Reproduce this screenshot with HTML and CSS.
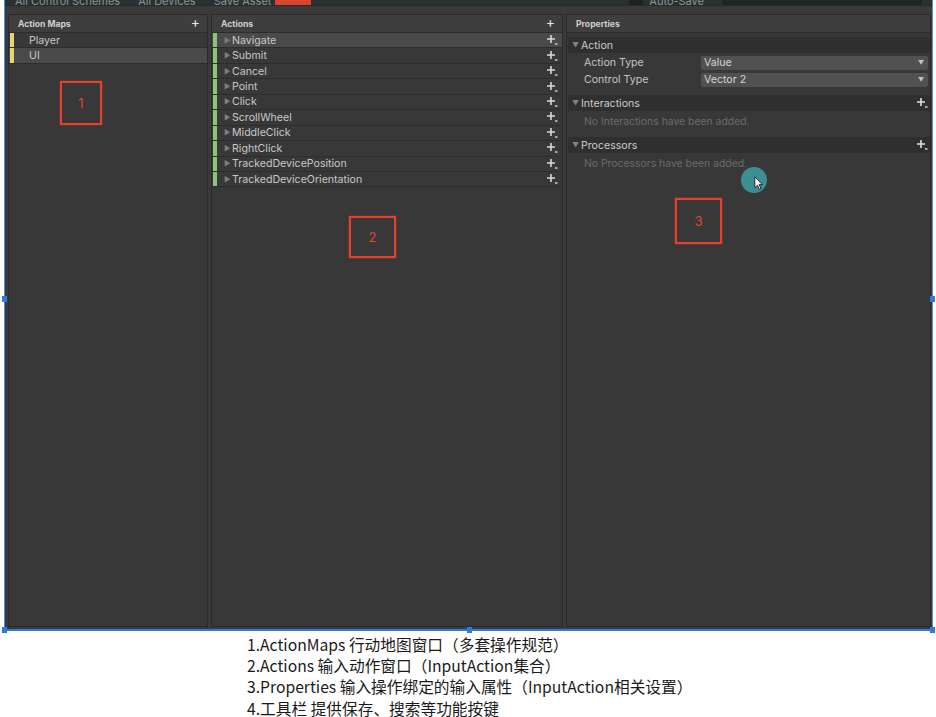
FILE: index.html
```html
<!DOCTYPE html>
<html>
<head>
<meta charset="utf-8">
<link rel="stylesheet" href="styles.css">
</head>
<body>
<div class="editor">
  <div class="toolbar">
    <span class="tb-item">All Control Schemes</span>
    <span class="tb-item">All Devices</span>
    <span class="tb-item">Save Asset <span class="tb-red"></span></span>
    <span class="tb-spacer"></span>
    <span class="tb-toggle"></span><span class="tb-item">Auto-Save</span>
    <span class="tb-search"></span>
  </div>
  <div class="panes">
    <section class="pane pane-maps">
      <div class="pane-head"><span>Action Maps</span><span class="plus">+</span></div>
      <div class="row map"><span class="bar yellow"></span><span class="label">Player</span></div>
      <div class="row map selected"><span class="bar yellow"></span><span class="label">UI</span></div>
      <div class="note-wrap note-1"><div class="note">1</div></div>
    </section>
    <section class="pane pane-actions">
      <div class="pane-head"><span>Actions</span><span class="plus">+</span></div>
      <div class="row act hover"><span class="bar green"></span><span class="tri">&#9654;</span><span class="label">Navigate</span><svg class="pd" viewBox="0 0 12 12"><path d="M5 1v8M1 5h8" stroke="#d8d8d8" stroke-width="1.6"/><path d="M9 10h2.5" stroke="#d8d8d8" stroke-width="1.4"/></svg></div>
      <div class="row act"><span class="bar green"></span><span class="tri">&#9654;</span><span class="label">Submit</span><svg class="pd" viewBox="0 0 12 12"><path d="M5 1v8M1 5h8" stroke="#d8d8d8" stroke-width="1.6"/><path d="M9 10h2.5" stroke="#d8d8d8" stroke-width="1.4"/></svg></div>
      <div class="row act"><span class="bar green"></span><span class="tri">&#9654;</span><span class="label">Cancel</span><svg class="pd" viewBox="0 0 12 12"><path d="M5 1v8M1 5h8" stroke="#d8d8d8" stroke-width="1.6"/><path d="M9 10h2.5" stroke="#d8d8d8" stroke-width="1.4"/></svg></div>
      <div class="row act"><span class="bar green"></span><span class="tri">&#9654;</span><span class="label">Point</span><svg class="pd" viewBox="0 0 12 12"><path d="M5 1v8M1 5h8" stroke="#d8d8d8" stroke-width="1.6"/><path d="M9 10h2.5" stroke="#d8d8d8" stroke-width="1.4"/></svg></div>
      <div class="row act"><span class="bar green"></span><span class="tri">&#9654;</span><span class="label">Click</span><svg class="pd" viewBox="0 0 12 12"><path d="M5 1v8M1 5h8" stroke="#d8d8d8" stroke-width="1.6"/><path d="M9 10h2.5" stroke="#d8d8d8" stroke-width="1.4"/></svg></div>
      <div class="row act"><span class="bar green"></span><span class="tri">&#9654;</span><span class="label">ScrollWheel</span><svg class="pd" viewBox="0 0 12 12"><path d="M5 1v8M1 5h8" stroke="#d8d8d8" stroke-width="1.6"/><path d="M9 10h2.5" stroke="#d8d8d8" stroke-width="1.4"/></svg></div>
      <div class="row act"><span class="bar green"></span><span class="tri">&#9654;</span><span class="label">MiddleClick</span><svg class="pd" viewBox="0 0 12 12"><path d="M5 1v8M1 5h8" stroke="#d8d8d8" stroke-width="1.6"/><path d="M9 10h2.5" stroke="#d8d8d8" stroke-width="1.4"/></svg></div>
      <div class="row act"><span class="bar green"></span><span class="tri">&#9654;</span><span class="label">RightClick</span><svg class="pd" viewBox="0 0 12 12"><path d="M5 1v8M1 5h8" stroke="#d8d8d8" stroke-width="1.6"/><path d="M9 10h2.5" stroke="#d8d8d8" stroke-width="1.4"/></svg></div>
      <div class="row act"><span class="bar green"></span><span class="tri">&#9654;</span><span class="label">TrackedDevicePosition</span><svg class="pd" viewBox="0 0 12 12"><path d="M5 1v8M1 5h8" stroke="#d8d8d8" stroke-width="1.6"/><path d="M9 10h2.5" stroke="#d8d8d8" stroke-width="1.4"/></svg></div>
      <div class="row act"><span class="bar green"></span><span class="tri">&#9654;</span><span class="label">TrackedDeviceOrientation</span><svg class="pd" viewBox="0 0 12 12"><path d="M5 1v8M1 5h8" stroke="#d8d8d8" stroke-width="1.6"/><path d="M9 10h2.5" stroke="#d8d8d8" stroke-width="1.4"/></svg></div>
      <div class="note-wrap note-2"><div class="note">2</div></div>
    </section>
    <section class="pane pane-props">
      <div class="pane-head"><span>Properties</span></div>
      <div class="fold"><span class="dtri">&#9660;</span><span>Action</span></div>
      <div class="field"><span class="flabel">Action Type</span><div class="dropdown"><span>Value</span><span class="dd-arrow">&#9660;</span></div></div>
      <div class="field"><span class="flabel">Control Type</span><div class="dropdown"><span>Vector 2</span><span class="dd-arrow">&#9660;</span></div></div>
      <div class="fold fold-gap"><span class="dtri">&#9660;</span><span class="grow">Interactions</span><svg class="pd" viewBox="0 0 12 12"><path d="M5 1v8M1 5h8" stroke="#e0e0e0" stroke-width="1.6"/><path d="M9 10h2.5" stroke="#e0e0e0" stroke-width="1.4"/></svg></div>
      <div class="empty">No Interactions have been added.</div>
      <div class="fold fold-gap2"><span class="dtri">&#9660;</span><span class="grow">Processors</span><svg class="pd" viewBox="0 0 12 12"><path d="M5 1v8M1 5h8" stroke="#e0e0e0" stroke-width="1.6"/><path d="M9 10h2.5" stroke="#e0e0e0" stroke-width="1.4"/></svg></div>
      <div class="empty">No Processors have been added.</div>
      <div class="note-wrap note-3"><div class="note">3</div></div>
      <div class="cursor-dot"></div>
      <svg class="cursor" viewBox="0 0 12 18"><path d="M1 1v13l3.2-3 2.2 5 2-.9-2.2-4.8H10z" fill="#fff" stroke="#111" stroke-width="1"/></svg>
    </section>
  </div>
  <span class="handle h-ml"></span>
  <span class="handle h-mr"></span>
  <span class="handle h-bl"></span>
  <span class="handle h-bm"></span>
  <span class="handle h-br"></span>
</div>
<div class="caption">
  <p>1.ActionMaps 行动地图窗口（多套操作规范）</p>
  <p>2.Actions 输入动作窗口（InputAction集合）</p>
  <p>3.Properties 输入操作绑定的输入属性（InputAction相关设置）</p>
  <p>4.工具栏 提供保存、搜索等功能按键</p>
</div>
</body>
</html>
```

FILE: styles.css
```css
* { box-sizing: border-box; }
html, body { margin: 0; padding: 0; background: #ffffff; }
body { width: 936px; height: 717px; overflow: hidden; font-family: Inter, "Noto Sans", sans-serif; }

.editor {
  position: relative;
  margin-left: 4px;
  width: 929px;
  height: 631px;
  background: #333333;
  border-left: 1px solid #4f8fd8;
  border-right: 1px solid #4f8fd8;
  border-bottom: 2px solid #2f7ae0;
  display: flex;
  flex-direction: column;
}

.toolbar {
  height: 6px;
  overflow: hidden;
  background: #2b3133;
  display: flex;
  align-items: flex-end;
  gap: 18px;
  padding-left: 10px;
  color: #8d9395;
  font-size: 11px;
  line-height: 7px;
  border-bottom: 1px solid #262a2b;
}
.tb-item { white-space: nowrap; height: 6px; display: flex; align-items: flex-end; }
.tb-red { display: inline-block; width: 36px; height: 6px; background: #d9442f; margin-left: 4px; }
.tb-spacer { flex: 1; }
.tb-toggle { display: inline-block; width: 14px; height: 6px; background: #1e2223; margin-right: -12px; }
.tb-search { display: inline-block; width: 200px; height: 5px; background: #1f2526; margin-right: 10px; border-radius: 0 0 3px 3px; }

.panes {
  flex: 1;
  display: flex;
  gap: 3px;
  padding: 8px 1px 2px 3px;
  background: #3a3a3a;
}

.pane {
  position: relative;
  background: #383838;
  border: 1px solid #2a2a2a;
  display: flex;
  flex-direction: column;
}
.pane-maps { width: 200px; }
.pane-actions { width: 352px; }
.pane-props { flex: 1; }

.pane-head {
  height: 18px;
  background: #3e3e3e;
  border-bottom: 1px solid #2c2c2c;
  display: flex;
  align-items: center;
  justify-content: space-between;
  padding: 0 7px 0 9px;
  font-size: 8.6px;
  font-weight: 700;
  color: #cfcfcf;
}
.plus { font-size: 14px; font-weight: 400; color: #e6e6e6; line-height: 14px; margin-top: -3px; }

.row {
  height: 15.45px;
  display: flex;
  align-items: center;
  border-bottom: 1px solid #2d2d2d;
  background: #383838;
  font-size: 10.6px;
  color: #c8c8c8;
}
.row.selected, .row.hover { background: #4a4a4a; }
.bar { width: 4px; align-self: stretch; margin-left: 1px; }
.bar.yellow { background: #e9d27a; }
.bar.green { background: #8bc47a; }
.map .label { margin-left: 15px; }
.tri { font-size: 7px; color: #7e7e7e; margin-left: 7px; width: 8px; }
.act .label { flex: 1; }
.pd { width: 12px; height: 12px; margin-right: 4px; flex: none; }

.note-wrap { display: flex; }
.note {
  width: 42px;
  height: 44px;
  border: 2px solid #e8402c;
  color: #e8402c;
  font-size: 13px;
  display: flex;
  align-items: center;
  justify-content: center;
  box-shadow: 0 0 2px rgba(232, 64, 44, 0.6);
}
.note-1 { padding: 17px 0 0 51px; }
.note-2 { padding: 29px 0 0 137px; }
.note-2 .note { width: 47px; height: 42px; }
.note-3 { padding: 25px 0 0 108px; }
.note-3 .note { width: 47px; height: 46px; }

.fold {
  margin: 4px 0 0 1px;
  height: 16px;
  background: #2f2f2f;
  display: flex;
  align-items: center;
  font-size: 10.6px;
  color: #cbcbcb;
  padding-left: 4px;
}
.fold-gap { margin-top: 7px; }
.fold-gap2 { margin-top: 6px; }
.grow { flex: 1; }
.dtri { font-size: 7px; color: #808080; width: 9px; }
.fold .pd { margin-right: 2px; }

.field {
  display: flex;
  align-items: center;
  height: 17px;
  padding-left: 17px;
  font-size: 10.6px;
  color: #c4c4c4;
}
.fold + .field { margin-top: 1px; }
.flabel { width: 117px; }
.dropdown {
  flex: 1;
  margin-right: 2px;
  height: 14px;
  background: #515151;
  border-radius: 2px;
  display: flex;
  align-items: center;
  justify-content: space-between;
  padding: 0 4px 0 3px;
  color: #d6d6d6;
}
.dd-arrow { font-size: 6px; color: #c4c4c4; }

.empty {
  height: 20px;
  display: flex;
  align-items: center;
  padding-left: 17px;
  font-size: 10.4px;
  color: #6b6b6b;
}

.cursor-dot {
  position: absolute;
  left: 174px;
  top: 152px;
  width: 26px;
  height: 26px;
  border-radius: 50%;
  background: #3e8f93;
}
.cursor {
  position: absolute;
  left: 187px;
  top: 161px;
  width: 10px;
  height: 15px;
}

.handle {
  position: absolute;
  width: 5px;
  height: 6px;
  background: #2f7ae0;
}
.h-ml { left: -3px; top: 296px; }
.h-mr { right: -3px; top: 296px; }
.h-bl { left: -3px; bottom: -4px; }
.h-bm { left: 462px; bottom: -4px; }
.h-br { right: -3px; bottom: -4px; }

.caption {
  padding: 3px 0 0 247px;
  font-family: "Noto Sans CJK SC", "Noto Sans", sans-serif;
  font-size: 15.7px;
  color: #1a1a1a;
}
.caption p { margin: 0; line-height: 21.2px; height: 21.2px; white-space: nowrap; }
```
